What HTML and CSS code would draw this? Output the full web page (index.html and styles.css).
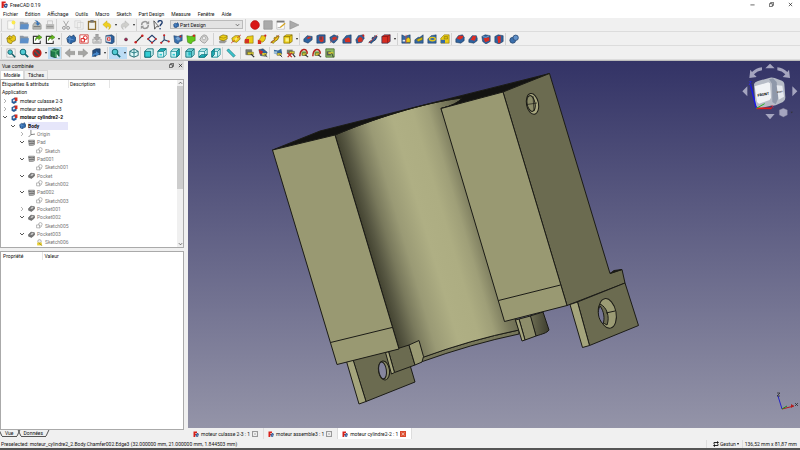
FILE: index.html
```html
<!DOCTYPE html>
<html lang="fr">
<head>
    <meta charset="UTF-8">
    <meta name="viewport" content="width=device-width, initial-scale=1.0">
    <title>FreeCAD 0.19</title>
    <link rel="stylesheet" href="styles.css">
</head>
<body>
<!-- icon sprites -->
<svg class="sprites" aria-hidden="true">
    <symbol id="logo" viewBox="0 0 12 12"><path d="M1 1h7v3H4.500v1.500H7V8H4.500v4H1z" fill="#d8201a"/><path d="M8 4.500l1.500-.5.5 1 1.500.5v2l-1 .5.5 2-1.500 1.500H8L6 11l-1-2 1-2.500z" fill="#1c4a8c"/><circle cx="8.300" cy="8" r="1.200" fill="#fff"/></symbol>
    <symbol id="new" viewBox="0 0 12 12"><path d="M2 1h7l1 2v8H2z" fill="#fafaf7" stroke="#bbb" stroke-width=".6"/><circle cx="9" cy="3" r="2.300" fill="#fbe94b"/></symbol>
    <symbol id="folder" viewBox="0 0 12 12"><path d="M1 2h4l1 1h5v8H1z" fill="#8b96a3"/><path d="M2 5h10l-1 6H1z" fill="#5d8fc9"/></symbol>
    <symbol id="save" viewBox="0 0 12 12"><path d="M1 6l2-3h6l2 3v5H1z" fill="#b9bcb8" stroke="#777" stroke-width=".6"/><path d="M3 1c3-1 5 0 5 3h2L7 7 4 4h2c0-2-1-2-3-3z" fill="#3873b5"/><path d="M2 8h8" stroke="#666"/></symbol>
    <symbol id="print" viewBox="0 0 12 12"><path d="M3 1h6v5H3z" fill="#eee" stroke="#aaa" stroke-width=".6"/><path d="M1 5h10v6H1z" fill="#b9b9b7"/><path d="M2 8h8" stroke="#888"/></symbol>
    <symbol id="cut" viewBox="0 0 12 12"><path d="M3 1l4 7M9 1L5 8" stroke="#aaa" stroke-width="1.200"/><g fill="none" stroke="#999" stroke-width="1.200"><circle cx="3.500" cy="9.500" r="1.700"/><circle cx="8.500" cy="9.500" r="1.700"/></g></symbol>
    <symbol id="copy" viewBox="0 0 12 12"><path d="M1 1h7v8H1zM4 3h7v8H4z" fill="#f1f1f0" stroke="#ccc" stroke-width=".7"/></symbol>
    <symbol id="paste" viewBox="0 0 12 12"><path d="M1 1h10v11H1z" fill="#8b6b2c"/><path d="M2.500 3h7v7.500h-7z" fill="#f0f0ec"/><path d="M4 0h4v3H4z" fill="#777"/></symbol>
    <symbol id="undo" viewBox="0 0 12 12"><path d="M6 1v2.500c5 0 6 5 2 8 1-3 1-4-2-4V10L1 5.500z" fill="#f0d020" stroke="#b89b00" stroke-width=".5"/></symbol>
    <symbol id="redo" viewBox="0 0 12 12"><path d="M6 1v2.500c-5 0-6 5-2 8-1-3-1-4 2-4V10l5-4.500z" fill="#cfcfcc" stroke="#aaa" stroke-width=".5"/></symbol>
    <symbol id="refresh" viewBox="0 0 12 12"><path d="M2 6c0-5 6-5 7-2M10 6c0 5-6 5-7 2" fill="none" stroke="#999" stroke-width="1.800"/><path d="M11 1v4H7zM1 11V7h4z" fill="#999"/></symbol>
    <symbol id="help" viewBox="0 0 12 12"><path d="M1 1l6 7-3 0-2 3z" fill="#eee" stroke="#222" stroke-width=".8"/><path d="M6 3c0-3 5-3 5 0 0 2-2.500 2-2.500 4.500" fill="none" stroke="#233f70" stroke-width="1.700"/><circle cx="8.500" cy="10.500" r="1" fill="#233f70"/></symbol>
    <symbol id="record" viewBox="0 0 12 12"><circle cx="6" cy="6" r="5.300" fill="#d81818" stroke="#a00" stroke-width=".6"/></symbol>
    <symbol id="stop" viewBox="0 0 12 12"><path d="M1 1h10v10H1z" fill="#aaa" stroke="#999"/></symbol>
    <symbol id="note" viewBox="0 0 12 12"><path d="M1 1h9v10H1z" fill="#fff" stroke="#aaa" stroke-width=".7"/><path d="M1 1h9v2H1z" fill="#777"/><path d="M5 9l6-5" stroke="#d6a520" stroke-width="1.500"/><path d="M2 9h3" stroke="#888" stroke-width=".7"/></symbol>
    <symbol id="play" viewBox="0 0 12 12"><path d="M1 1l11 5-11 5z" fill="#aaa" stroke="#888" stroke-width=".6"/></symbol>
    <symbol id="part" viewBox="0 0 12 12"><path d="M1 5l3-3 3 1 2-2 3 3-1 4-3 1-2 3-4-2z" fill="#e8c81a" stroke="#6f5d00" stroke-width=".7"/><path d="M4 2v4l4 3M1 5l3 1 4-2" fill="none" stroke="#8f7800" stroke-width=".7"/></symbol>
    <symbol id="link" viewBox="0 0 12 12"><path d="M1 2h7v1.500H2.500v7H9V8h1.500v4H1z" fill="#333"/><path d="M2.500 3.500H9v7H2.500z" fill="#fff"/><path d="M4 8c0-4 2-5 4-5V1l4 3-4 3V5C6 5 5 6 4 8z" fill="#64b81b" stroke="#286000" stroke-width=".5"/></symbol>
    <symbol id="body" viewBox="0 0 12 12"><path d="M1 5l3-3 3 1 2-2 3 4-1 4-3 1-2 2-4-2z" fill="#2d66a8" stroke="#10294c" stroke-width=".7"/><path d="M4 2l1 4 4 1M1 5l4 1-1 5" fill="none" stroke="#79a9df" stroke-width=".7"/></symbol>
    <symbol id="sketch-red" viewBox="0 0 12 12"><path d="M1 1h10v10H1z" fill="#fff" stroke="#cc3b35"/><circle cx="7.500" cy="4.500" r="2.300" fill="none" stroke="#d22" stroke-width="1.200"/><path d="M2.500 5.500h4v4h-4z" fill="none" stroke="#d22" stroke-width="1.200"/></symbol>
    <symbol id="edit-sketch" viewBox="0 0 12 12"><path d="M1 6h10v5H1z" fill="#ddd" stroke="#888" stroke-width=".7"/><path d="M4.500 0h3v4H10L6 8 2 4h2.500z" fill="#aaa" stroke="#777" stroke-width=".5"/><path d="M3 9.500h6" stroke="#999"/></symbol>
    <symbol id="map" viewBox="0 0 12 12"><path d="M1 2l7-1 3 2v7l-3 2-7-2z" fill="#2d5f9b" stroke="#183250" stroke-width=".6"/><path d="M1.500 3H7v7l-5.500-1z" fill="#e6e6e6"/><path d="M3 4.500h3v3H3z" fill="none" stroke="#d22"/></symbol>
    <symbol id="point" viewBox="0 0 12 12"><circle cx="6" cy="6.500" r="1.800" fill="#a32455" stroke="#222" stroke-width=".5"/></symbol>
    <symbol id="line" viewBox="0 0 12 12"><path d="M2 10l8-8" stroke="#233" stroke-width="1.400"/><circle cx="2" cy="10" r="1.500" fill="#c22"/><circle cx="10" cy="2" r="1.500" fill="#c22"/></symbol>
    <symbol id="plane" viewBox="0 0 12 12"><path d="M1 6l5-4.500L11 6l-5 4.500z" fill="#f6f6f6" stroke="#223d6b" stroke-width="1.300"/><g fill="#c22"><circle cx="1.500" cy="6" r="1.200"/><circle cx="10.500" cy="6" r="1.200"/><circle cx="6" cy="10.500" r="1.200"/></g></symbol>
    <symbol id="axes" viewBox="0 0 12 12"><path d="M5 1v6l6 2M5 7l-4 4" fill="none" stroke="#2b4468" stroke-width="1.400"/><g fill="#c22"><circle cx="5" cy="1.500" r="1.300"/><circle cx="10.500" cy="9" r="1.300"/><circle cx="1.500" cy="10.500" r="1.300"/></g></symbol>
    <symbol id="binder" viewBox="0 0 12 12"><path d="M1 2l5 1 5-2v7l-3 1-2 3-4-2z" fill="#3870ae" stroke="#173558" stroke-width=".6"/><path d="M3 5l3-2 3 3-3 2z" fill="#7da7d4"/><circle cx="9" cy="3" r="1.200" fill="#c22"/></symbol>
    <symbol id="green-binder" viewBox="0 0 12 12"><path d="M1 2l5 1 5-2v7l-3 1-2 3-4-2z" fill="#62c81b" stroke="#2b6d00" stroke-width=".6"/><circle cx="9.500" cy="2" r="1.400" fill="#c22"/></symbol>
    <symbol id="clone" viewBox="0 0 12 12"><path d="M6 1l3 1 2 4-2 3-2 2-3-1-3-3 2-4z" fill="#d4d4d2" stroke="#999"/><circle cx="6" cy="5" r="2" fill="#eee" stroke="#999" stroke-width=".7"/></symbol>
    <symbol id="pad" viewBox="0 0 12 12"><path d="M1 9l4-2 6 1-3 3-6 0z" fill="#999"/><path d="M2 3l4-2 5 1v4L7 8 2 7z" fill="#eccd16" stroke="#715f00" stroke-width=".7"/><path d="M2 4l5 1 4-2" fill="none" stroke="#8c7700" stroke-width=".7"/></symbol>
    <symbol id="revolve" viewBox="0 0 12 12"><path d="M1 5l4-3 5 0 1 4-4 4-5-1z" fill="#eccd16" stroke="#715f00" stroke-width=".7"/><path d="M0 11L12 1" stroke="#c22" stroke-width=".8"/><path d="M4 6l3-2 1 2-3 2z" fill="#f9ec73"/></symbol>
    <symbol id="loft" viewBox="0 0 12 12"><path d="M1 8l3-5 7-1v9H1z" fill="#eccd16" stroke="#715f00" stroke-width=".6"/><path d="M1 6h5v5H1z" fill="#d63122"/></symbol>
    <symbol id="sweep" viewBox="0 0 12 12"><path d="M2 8c1-3 3-3 3-6h5c1 4-1 7-4 8z" fill="#eccd16" stroke="#715f00" stroke-width=".6"/><path d="M1 7l4 1v4H1z" fill="#d63122"/><circle cx="10" cy="2" r="1.300" fill="#c22"/></symbol>
    <symbol id="helix" viewBox="0 0 12 12"><path d="M1 10c3-4 5 0 4-4s4 0 3-4l3 1-2 4-3 2-2 2z" fill="#eccd16" stroke="#715f00" stroke-width=".9"/><path d="M1 11L11 1" stroke="#b33" stroke-width=".7"/></symbol>
    <symbol id="addbox" viewBox="0 0 12 12"><path d="M1 3l3-2h7v8l-3 2H1z" fill="#eccd16" stroke="#715f00" stroke-width=".7"/><path d="M1 3h7v8M8 3l3-2" fill="none" stroke="#715f00" stroke-width=".7"/><path d="M3 5h4v4H3z" fill="#fbf28b"/></symbol>
    <symbol id="pocket" viewBox="0 0 12 12"><path d="M1 6l4-4 6 1v4l-5 4-5-2z" fill="#2e629f" stroke="#142c4b" stroke-width=".6"/><path d="M4 5l3-2 3 1-3 2z" fill="#d63122"/></symbol>
    <symbol id="hole" viewBox="0 0 12 12"><path d="M1 2l3-1h7v9l-3 1H1z" fill="#2e629f" stroke="#142c4b" stroke-width=".6"/><path d="M4 3h5v6l-3 1-2-2z" fill="#d63122"/><path d="M6 3v4" stroke="#223d63" stroke-width="1.200"/></symbol>
    <symbol id="groove" viewBox="0 0 12 12"><path d="M1 4l5-3 5 2-1 4-4 4-4-2z" fill="#2e629f" stroke="#142c4b" stroke-width=".6"/><path d="M3 5l4-2 3 2-4 3z" fill="#d63122"/><path d="M1 11L11 1" stroke="#b44" stroke-width=".7"/></symbol>
    <symbol id="subloft" viewBox="0 0 12 12"><path d="M1 7l4-5 6-1v10H1z" fill="#2e629f" stroke="#142c4b" stroke-width=".6"/><path d="M3 6l5-2 2 2v4H4z" fill="#d63122"/></symbol>
    <symbol id="subsweep" viewBox="0 0 12 12"><path d="M1 7l3-5 6-1 1 4-3 5-6 1z" fill="#2e629f" stroke="#142c4b" stroke-width=".6"/><path d="M3 6l3-3 3 2 0 4-5 1z" fill="#d63122"/><circle cx="10" cy="2" r="1.300" fill="#c22"/></symbol>
    <symbol id="subhelix" viewBox="0 0 12 12"><path d="M1 10c3-4 5 0 4-4s4 0 3-4l3 1-2 4-3 2-2 2z" fill="#2e629f" stroke="#142c4b" stroke-width=".9"/><path d="M1 11L11 1" stroke="#d33" stroke-width=".9"/></symbol>
    <symbol id="subbox" viewBox="0 0 12 12"><path d="M1 3l3-2h7v8l-3 2H1z" fill="#d92c20" stroke="#26385a" stroke-width=".8"/><path d="M1 3h7v8M8 3l3-2" fill="none" stroke="#7a1515" stroke-width=".8"/></symbol>
    <symbol id="mirror" viewBox="0 0 12 12"><path d="M1 1l4 2 2-1 4-1v10H1z" fill="#3569a5" stroke="#173354" stroke-width=".6"/><path d="M6 6l3-2 2 2v4H6z" fill="#eccd16" stroke="#6f5d00" stroke-width=".5"/><path d="M2 7h3v2H2z" fill="#e9e9e9"/><path d="M6 1v10" stroke="#d44" stroke-width=".8"/></symbol>
    <symbol id="linear" viewBox="0 0 12 12"><path d="M1 7l4-3h2l4-3v10H1z" fill="#3569a5" stroke="#173354" stroke-width=".6"/><path d="M3 7l2-1 5-2v3l-5 2z" fill="#d5b90d" stroke="#6f5d00" stroke-width=".5"/></symbol>
    <symbol id="polar" viewBox="0 0 12 12"><path d="M1 6l4-4 6-1v10H1z" fill="#3569a5" stroke="#173354" stroke-width=".6"/><ellipse cx="6.500" cy="6" rx="3.500" ry="2" fill="none" stroke="#e2c51c" stroke-width="1.700"/></symbol>
    <symbol id="multi" viewBox="0 0 12 12"><path d="M1 5l4-4h6v10H1z" fill="#eccd16" stroke="#6f5d00" stroke-width=".6"/><path d="M1 7h5v4H1z" fill="#3569a5"/><path d="M5 3h4v3H5z" fill="#d5b90d" stroke="#6f5d00" stroke-width=".5"/></symbol>
    <symbol id="fillet" viewBox="0 0 12 12"><path d="M1 6l3-4 5-1 2 3v4l-4 3-6-1z" fill="#2e629f" stroke="#142c4b" stroke-width=".6"/><path d="M2 5l3-3 5 0-1 3-3 2z" fill="#e02b20"/></symbol>
    <symbol id="chamfer" viewBox="0 0 12 12"><path d="M1 7l4-5 5 0 1 3v3l-4 3-6-1z" fill="#2e629f" stroke="#142c4b" stroke-width=".6"/><path d="M3 7l3-5 4 1-2 5z" fill="#e02b20"/></symbol>
    <symbol id="draft" viewBox="0 0 12 12"><path d="M1 3l4-2 6 1v7l-5 3-4-3z" fill="#2e629f" stroke="#142c4b" stroke-width=".6"/><path d="M3 5l7-1v4l-5 2z" fill="#d92c20"/><path d="M2 3l4 1 4-2" fill="none" stroke="#7da7d4"/></symbol>
    <symbol id="thickness" viewBox="0 0 12 12"><path d="M1 3l4-2 6 1v7l-5 3-5-2z" fill="#2e629f" stroke="#142c4b" stroke-width=".6"/><path d="M4 3l4-1v8l-3 1z" fill="#e02b20"/></symbol>
    <symbol id="boolean" viewBox="0 0 12 12"><circle cx="4.500" cy="7.500" r="3.500" fill="#3b70ad" stroke="#2a4a74"/><circle cx="8" cy="4.500" r="3.200" fill="#6191c9" stroke="#2a4a74"/></symbol>
    <symbol id="fitall" viewBox="0 0 12 12"><path d="M1 1h10v10H1z" fill="#f5f5f5" stroke="#999" stroke-width=".6"/><circle cx="5" cy="5" r="2.700" fill="#46c5cd" stroke="#125a62"/><path d="M7 7l4 4" stroke="#125a62" stroke-width="1.700"/></symbol>
    <symbol id="zoom" viewBox="0 0 12 12"><circle cx="4.800" cy="4.800" r="3.400" fill="#52cbd3" stroke="#126873" stroke-width="1.200"/><path d="M7 7l4 4" stroke="#126873" stroke-width="2"/></symbol>
    <symbol id="draw" viewBox="0 0 12 12"><circle cx="6" cy="6" r="4.500" fill="#3a4a50" stroke="#c2221d" stroke-width="2"/><path d="M3 3l6 6" stroke="#c2221d" stroke-width="1.700"/></symbol>
    <symbol id="box-green" viewBox="0 0 12 12"><path d="M1 3l4-2 6 1v8l-4 2-6-2z" fill="#1f7a4a" stroke="#0a3524" stroke-width=".7"/><path d="M1 3l6 1 4-2M7 4v7" fill="none" stroke="#69c27c"/><path d="M8 7l3 4-3 1z" fill="#fff"/></symbol>
    <symbol id="back" viewBox="0 0 12 12"><path d="M6 1v3h6v4H6v3L0 6z" fill="#a5a5a3" stroke="#8d8d8b" stroke-width=".5"/></symbol>
    <symbol id="forward" viewBox="0 0 12 12"><path d="M6 1v3H0v4h6v3l6-5z" fill="#a5a5a3" stroke="#8d8d8b" stroke-width=".5"/></symbol>
    <symbol id="linkview" viewBox="0 0 12 12"><path d="M2 3l4-2h5v7H8l-2 2H2z" fill="#244f83" stroke="#14304f" stroke-width=".7"/><path d="M1 11c0-4 3-5 5-5V4l4 3-4 3V8c-2 0-3 1-5 3z" fill="#4687c9"/></symbol>
    <symbol id="axo" viewBox="0 0 12 12"><path d="M6 1l5 3v5l-5 2-5-2V4z" fill="#dff8f9" stroke="#0b5960"/><path d="M1 4l5 2 5-2M6 1v10" fill="none" stroke="#116d75"/></symbol>
    <symbol id="front" viewBox="0 0 12 12"><path d="M1 4l3-3h7v7l-3 3H1z" fill="#cdf5f6" stroke="#0b6870"/><path d="M1 4h7v7H1z" fill="#34cdd4" stroke="#0b6870"/></symbol>
    <symbol id="top" viewBox="0 0 12 12"><path d="M1 4l3-3h7v7l-3 3H1z" fill="#d8f7f8" stroke="#0b8890"/><path d="M1 4l3-3h7L8 4z" fill="#22bac4" stroke="#0b6870"/><path d="M8 4v7" fill="none" stroke="#128791"/><path d="M3 7h3v2H3z" fill="#34cdd4"/></symbol>
    <symbol id="right" viewBox="0 0 12 12"><path d="M1 4l3-3h7v7l-3 3H1z" fill="#d8f7f8" stroke="#0b8890"/><path d="M8 4l3-3v7l-3 3z" fill="#22bac4" stroke="#0b6870"/><path d="M1 4h7" fill="none" stroke="#128791"/><path d="M3 7h3v2H3z" fill="#34cdd4"/></symbol>
    <symbol id="rear" viewBox="0 0 12 12"><path d="M1 4l3-3h7v7l-3 3H1z" fill="#7fdfe4" stroke="#0b6870"/><path d="M1 4h7v7M8 4l3-3" fill="none" stroke="#0b6870"/><path d="M4 5h3v4H4z" fill="#22bac4"/></symbol>
    <symbol id="bottom" viewBox="0 0 12 12"><path d="M1 4l3-3h7v7l-3 3H1z" fill="#d8f7f8" stroke="#0b8890"/><path d="M1 11l3-3h7l-3 3z" fill="#22bac4" stroke="#0b6870"/><path d="M1 4h7v7M8 4l3-3" fill="none" stroke="#128791"/></symbol>
    <symbol id="left" viewBox="0 0 12 12"><path d="M1 4l3-3h7v7l-3 3H1z" fill="#d8f7f8" stroke="#0b8890"/><path d="M1 4l3-3v7l-3 3z" fill="#22bac4" stroke="#0b6870"/><path d="M1 4h7v7M8 4l3-3" fill="none" stroke="#128791"/></symbol>
    <symbol id="ruler" viewBox="0 0 12 12"><path d="M3 1l8 8-2 2-8-8z" fill="#3bc4cd" stroke="#0b6870" stroke-width=".7"/></symbol>
    <symbol id="measure" viewBox="0 0 12 12"><path d="M1 2h7v6H1z" fill="#777d74" stroke="#555" stroke-width=".6"/><path d="M3 5h7v3H3z" fill="#d9ca32" stroke="#5b5205" stroke-width=".5"/><path d="M7 7l4 4" stroke="#333" stroke-width="1.500"/></symbol>
    <symbol id="measure-red" viewBox="0 0 12 12"><path d="M1 2l5-1 5 4-2 5-6-1z" fill="#2e629f" stroke="#333" stroke-width=".6"/><path d="M1 2l5 2-1 4-3-1z" fill="#c52d26"/><path d="M5 6h5v3H5z" fill="#d9ca32"/><path d="M8 7l3 4" stroke="#333"/></symbol>
    <symbol id="measure-delete" viewBox="0 0 12 12"><path d="M1 2h7v5H1z" fill="#777d74"/><path d="M4 4h6v3H4z" fill="#d9ca32" stroke="#333" stroke-width=".5"/><path d="M2 6l5 5M7 6l-5 5" stroke="#c52d26" stroke-width="1.500"/><path d="M8 7l3 4" stroke="#333" stroke-width="1.300"/></symbol>
    <symbol id="measure-clear" viewBox="0 0 12 12"><path d="M3 4h6v5H3z" fill="#78a84a"/><path d="M4 6h5v3H4z" fill="#d9ca32" stroke="#333" stroke-width=".5"/><path d="M1 10c0-10 9-11 9-3" fill="none" stroke="#b5251d" stroke-width="1.800"/><path d="M7 8l4 3" stroke="#333" stroke-width="1.300"/></symbol>
    <symbol id="measure-delta" viewBox="0 0 12 12"><path d="M1 1h10v10H1z" fill="#8dbb60" stroke="#52713b"/><path d="M2 4h5v5H2z" fill="#555b52"/><path d="M4 5h6v2H4z" fill="#d9ca32"/><path d="M8 6l2 5" stroke="#333"/></symbol>
    <symbol id="measure-blue" viewBox="0 0 12 12"><path d="M1 2l5 1 4-2 1 6-5 1-4-1z" fill="#34699d"/><path d="M1 4h4v3H1z" fill="#9ec1d9"/><path d="M5 6h5v3H5z" fill="#d9ca32" stroke="#555" stroke-width=".5"/><path d="M8 8l3 3" stroke="#333"/></symbol>
    <symbol id="document" viewBox="0 0 12 12"><path d="M1 4l6-3 3 8-5 3-4-2z" fill="#2b5c98"/><path d="M6 1h5v6H7z" fill="#d22c22"/><path d="M3 5l3-1 1 3-3 1z" fill="#e9edf5"/></symbol>
    <symbol id="t-axes" viewBox="0 0 12 12"><path d="M5 0v8l7-1M5 8l-4 4" fill="none" stroke="#555" stroke-width="1.200"/></symbol>
    <symbol id="t-pad" viewBox="0 0 12 12"><path d="M1 2h10v8l-3 1H2z" fill="#bbb" stroke="#666"/><path d="M1 4l6 1 4-1M2 8h5l4-1" fill="none" stroke="#555" stroke-width="1.300"/></symbol>
    <symbol id="t-pocket" viewBox="0 0 12 12"><path d="M1 6l4-4 6 1v4l-5 4-5-2z" fill="#777" stroke="#555"/><path d="M4 6l3-3 3 1-3 3z" fill="#ccc"/></symbol>
    <symbol id="t-sketch" viewBox="0 0 12 12"><circle cx="7.500" cy="4" r="3" fill="#fff" stroke="#888"/><path d="M1 5h5v5H1z" fill="#fff" stroke="#888"/><path d="M6 11l4-4" stroke="#999"/></symbol>
    <symbol id="t-warning" viewBox="0 0 12 12"><circle cx="6" cy="4" r="3" fill="#eee" stroke="#888"/><path d="M2 6h8v5H2z" fill="#e8cf32"/><path d="M5 7l6 5" stroke="#8a7400"/></symbol>
    <symbol id="down" viewBox="0 0 12 12"><path d="M2 4l4 4 4-4" fill="none" stroke="#444" stroke-width="1.800"/></symbol>
    <symbol id="next" viewBox="0 0 12 12"><path d="M4 2l4 4-4 4" fill="none" stroke="#999" stroke-width="1.500"/></symbol>
    <symbol id="up" viewBox="0 0 12 12"><path d="M2 8l4-4 4 4" fill="none" stroke="#444" stroke-width="1.800"/></symbol>
    <symbol id="close" viewBox="0 0 12 12"><path d="M2 2l8 8M10 2l-8 8" stroke="currentColor" stroke-width="1.500"/></symbol>
    <symbol id="restore" viewBox="0 0 12 12"><path d="M1 4h7v7H1zM4 4V1h7v7H8" fill="none" stroke="currentColor" stroke-width="1.400"/></symbol>
    <symbol id="minus" viewBox="0 0 12 12"><path d="M1 7h10" stroke="currentColor" stroke-width="1.500"/></symbol>
</svg>

<div class="window">
    <header class="titlebar">
        <svg class="logo"><use href="#logo"/></svg>
        <h1>FreeCAD 0.19</h1>
        <div class="window-buttons">
            <button aria-label="Réduire"><svg><use href="#minus"/></svg></button>
            <button aria-label="Restaurer"><svg><use href="#restore"/></svg></button>
            <button aria-label="Fermer"><svg><use href="#close"/></svg></button>
        </div>
    </header>
    <nav class="menubar">
        <a href="#">Fichier</a>
        <a href="#">Édition</a>
        <a href="#">Affichage</a>
        <a href="#">Outils</a>
        <a href="#">Macro</a>
        <a href="#">Sketch</a>
        <a href="#">Part Design</a>
        <a href="#">Measure</a>
        <a href="#">Fenêtre</a>
        <a href="#">Aide</a>
    </nav>

    <div class="toolbar">
        <div class="group">
            <button aria-label="Nouveau"><svg><use href="#new"/></svg></button>
            <button aria-label="Ouvrir"><svg><use href="#folder"/></svg></button>
            <button aria-label="Enregistrer"><svg><use href="#save"/></svg></button>
            <button aria-label="Imprimer"><svg><use href="#print"/></svg></button>
        </div>
        <div class="group">
            <button aria-label="Couper"><svg><use href="#cut"/></svg></button>
            <button aria-label="Copier"><svg><use href="#copy"/></svg></button>
            <button aria-label="Coller"><svg><use href="#paste"/></svg></button>
        </div>
        <div class="group plain">
            <button aria-label="Annuler"><svg><use href="#undo"/></svg></button>
            <button class="arrow" aria-label="Liste annuler"></button>
            <button aria-label="Rétablir"><svg><use href="#redo"/></svg></button>
            <button class="arrow" aria-label="Liste rétablir"></button>
        </div>
        <div class="group plain">
            <button aria-label="Rafraîchir"><svg><use href="#refresh"/></svg></button>
            <button aria-label="Qu'est-ce que c'est ?"><svg><use href="#help"/></svg></button>
        </div>
        <div class="workbench">
            <svg><use href="#body"/></svg>
            <select aria-label="Atelier"><option>Part Design</option></select>
            <svg class="chevron"><use href="#down"/></svg>
        </div>
        <div class="group">
            <button aria-label="Enregistrer une macro"><svg><use href="#record"/></svg></button>
            <button aria-label="Arrêter"><svg><use href="#stop"/></svg></button>
            <button aria-label="Macros"><svg><use href="#note"/></svg></button>
            <button aria-label="Exécuter"><svg><use href="#play"/></svg></button>
        </div>
    </div>

    <div class="toolbar">
        <div class="group">
            <button aria-label="Créer une pièce"><svg><use href="#part"/></svg></button>
            <button aria-label="Créer un groupe"><svg><use href="#folder"/></svg></button>
            <button aria-label="Créer un lien"><svg><use href="#link"/></svg></button>
            <button aria-label="Actions de lien"><svg><use href="#link"/></svg></button>
            <button class="arrow" aria-label="Liste des liens"></button>
        </div>
        <div class="group">
            <button aria-label="Créer un corps"><svg><use href="#body"/></svg></button>
            <button aria-label="Créer une esquisse"><svg><use href="#sketch-red"/></svg></button>
            <button aria-label="Éditer l'esquisse"><svg><use href="#edit-sketch"/></svg></button>
            <button aria-label="Appliquer l'esquisse"><svg><use href="#map"/></svg></button>
        </div>
        <div class="group">
            <button aria-label="Point"><svg><use href="#point"/></svg></button>
            <button aria-label="Ligne"><svg><use href="#line"/></svg></button>
            <button aria-label="Plan"><svg><use href="#plane"/></svg></button>
            <button aria-label="Repère"><svg><use href="#axes"/></svg></button>
            <button aria-label="Forme liée"><svg><use href="#binder"/></svg></button>
            <button aria-label="Sous-forme liée"><svg><use href="#green-binder"/></svg></button>
            <button aria-label="Clone"><svg><use href="#clone"/></svg></button>
        </div>
        <div class="group wide">
            <button aria-label="Protrusion"><svg><use href="#pad"/></svg></button>
            <button aria-label="Révolution"><svg><use href="#revolve"/></svg></button>
            <button aria-label="Lissage additif"><svg><use href="#loft"/></svg></button>
            <button aria-label="Balayage additif"><svg><use href="#sweep"/></svg></button>
            <button aria-label="Hélice additive"><svg><use href="#helix"/></svg></button>
            <button aria-label="Primitive additive"><svg><use href="#addbox"/></svg></button>
            <button class="arrow" aria-label="Liste des primitives additives"></button>
        </div>
        <div class="group plain">
            <button aria-label="Cavité"><svg><use href="#pocket"/></svg></button>
            <button aria-label="Perçage"><svg><use href="#hole"/></svg></button>
            <button aria-label="Rainure"><svg><use href="#groove"/></svg></button>
            <button aria-label="Lissage soustractif"><svg><use href="#subloft"/></svg></button>
            <button aria-label="Balayage soustractif"><svg><use href="#subsweep"/></svg></button>
            <button aria-label="Hélice soustractive"><svg><use href="#subhelix"/></svg></button>
            <button aria-label="Primitive soustractive"><svg><use href="#subbox"/></svg></button>
            <button class="arrow" aria-label="Liste des primitives soustractives"></button>
        </div>
        <div class="group plain">
            <button aria-label="Symétrie"><svg><use href="#mirror"/></svg></button>
            <button aria-label="Répétition linéaire"><svg><use href="#linear"/></svg></button>
            <button aria-label="Répétition circulaire"><svg><use href="#polar"/></svg></button>
            <button aria-label="Transformation multiple"><svg><use href="#multi"/></svg></button>
        </div>
        <div class="group plain">
            <button aria-label="Congé"><svg><use href="#fillet"/></svg></button>
            <button aria-label="Chanfrein"><svg><use href="#chamfer"/></svg></button>
            <button aria-label="Dépouille"><svg><use href="#draft"/></svg></button>
            <button aria-label="Évidement"><svg><use href="#thickness"/></svg></button>
        </div>
        <div class="group plain">
            <button aria-label="Opération booléenne"><svg><use href="#boolean"/></svg></button>
        </div>
    </div>

    <div class="toolbar">
        <div class="group">
            <button aria-label="Tout afficher"><svg><use href="#fitall"/></svg></button>
            <button aria-label="Afficher la sélection"><svg><use href="#zoom"/></svg></button>
            <button aria-label="Style de représentation"><svg><use href="#draw"/></svg></button>
            <button class="arrow" aria-label="Liste des styles"></button>
            <button class="on" aria-label="Boîte englobante"><svg><use href="#box-green"/></svg></button>
        </div>
        <div class="group plain">
            <button aria-label="Précédent"><svg><use href="#back"/></svg></button>
            <button aria-label="Suivant"><svg><use href="#forward"/></svg></button>
            <button aria-label="Aller à l'objet lié"><svg><use href="#linkview"/></svg></button>
            <button class="arrow" aria-label="Liste des objets liés"></button>
        </div>
        <div class="group plain">
            <button class="on" aria-label="Zoom"><svg><use href="#zoom"/></svg></button>
            <button class="arrow on" aria-label="Liste des zooms"></button>
            <button aria-label="Axonométrique"><svg><use href="#axo"/></svg></button>
        </div>
        <div class="group plain">
            <button aria-label="Devant"><svg><use href="#front"/></svg></button>
            <button aria-label="Dessus"><svg><use href="#top"/></svg></button>
            <button aria-label="Droite"><svg><use href="#right"/></svg></button>
        </div>
        <div class="group plain">
            <button aria-label="Arrière"><svg><use href="#rear"/></svg></button>
            <button aria-label="Dessous"><svg><use href="#bottom"/></svg></button>
            <button aria-label="Gauche"><svg><use href="#left"/></svg></button>
        </div>
        <div class="group plain">
            <button aria-label="Mesurer la distance"><svg><use href="#ruler"/></svg></button>
        </div>
        <div class="group wide">
            <button aria-label="Mesure linéaire"><svg><use href="#measure"/></svg></button>
            <button aria-label="Mesure angulaire"><svg><use href="#measure-red"/></svg></button>
        </div>
        <div class="group plain">
            <button aria-label="Actualiser les mesures"><svg><use href="#measure-blue"/></svg></button>
            <button aria-label="Effacer les mesures"><svg><use href="#measure-delete"/></svg></button>
            <button aria-label="Basculer tout"><svg><use href="#measure-clear"/></svg></button>
            <button aria-label="Basculer 3D"><svg><use href="#measure-clear"/></svg></button>
            <button aria-label="Basculer delta"><svg><use href="#measure-delta"/></svg></button>
        </div>
    </div>

    <main class="workspace">
        <aside class="panel">
            <div class="panel-title">
                <h2>Vue combinée</h2>
                <button aria-label="Détacher"><svg><use href="#restore"/></svg></button>
                <button aria-label="Fermer le panneau"><svg><use href="#close"/></svg></button>
            </div>
            <div class="panel-tabs">
                <button class="active">Modèle</button>
                <button>Tâches</button>
            </div>
            <div class="tree-box">
                <div class="tree-view">
                    <div class="tree-header"><span>Étiquettes &amp; attributs</span><span>Description</span></div>
                    <ul class="tree">
                        <li class="root">Application</li>
                        <li class="level-0"><svg><use href="#next"/></svg><svg><use href="#document"/></svg><span>moteur culasse 2-3</span></li>
                        <li class="level-0"><svg><use href="#next"/></svg><svg><use href="#document"/></svg><span>moteur assemble3</span></li>
                        <li class="level-0 bold"><svg><use href="#down"/></svg><svg><use href="#document"/></svg><span>moteur cylindre2-2</span></li>
                        <li class="level-1 bold selected"><svg><use href="#down"/></svg><svg><use href="#body"/></svg><span>Body</span></li>
                        <li class="level-2"><svg><use href="#next"/></svg><svg><use href="#t-axes"/></svg><span>Origin</span></li>
                        <li class="level-2"><svg><use href="#down"/></svg><svg><use href="#t-pad"/></svg><span>Pad</span></li>
                        <li class="level-3"><svg></svg><svg><use href="#t-sketch"/></svg><span>Sketch</span></li>
                        <li class="level-2"><svg><use href="#down"/></svg><svg><use href="#t-pad"/></svg><span>Pad001</span></li>
                        <li class="level-3"><svg></svg><svg><use href="#t-sketch"/></svg><span>Sketch001</span></li>
                        <li class="level-2"><svg><use href="#down"/></svg><svg><use href="#t-pocket"/></svg><span>Pocket</span></li>
                        <li class="level-3"><svg></svg><svg><use href="#t-sketch"/></svg><span>Sketch002</span></li>
                        <li class="level-2"><svg><use href="#down"/></svg><svg><use href="#t-pad"/></svg><span>Pad002</span></li>
                        <li class="level-3"><svg></svg><svg><use href="#t-sketch"/></svg><span>Sketch003</span></li>
                        <li class="level-2"><svg><use href="#next"/></svg><svg><use href="#t-pocket"/></svg><span>Pocket001</span></li>
                        <li class="level-2"><svg><use href="#down"/></svg><svg><use href="#t-pocket"/></svg><span>Pocket002</span></li>
                        <li class="level-3"><svg></svg><svg><use href="#t-sketch"/></svg><span>Sketch005</span></li>
                        <li class="level-2"><svg><use href="#down"/></svg><svg><use href="#t-pocket"/></svg><span>Pocket003</span></li>
                        <li class="level-3"><svg></svg><svg><use href="#t-warning"/></svg><span>Sketch006</span></li>
                    </ul>
                </div>
                <div class="scrollbar">
                    <svg><use href="#up"/></svg>
                    <div class="thumb"></div>
                    <svg><use href="#down"/></svg>
                </div>
            </div>
            <div class="property-box">
                <table>
                    <tr><th>Propriété</th><th>Valeur</th></tr>
                </table>
            </div>
            <div class="bottom-tabs">
                <button>Vue</button>
                <button>Données</button>
            </div>
        </aside>

        <section class="document">
            <div class="viewport">
                <svg class="model" viewBox="188 61 612 367" role="img" aria-label="moteur cylindre2-2">
                    <defs>
                        <linearGradient id="bore" gradientUnits="userSpaceOnUse" x1="335" y1="135" x2="460" y2="98">
                            <stop offset="0" stop-color="#424230"/>
                            <stop offset=".07" stop-color="#585843"/>
                            <stop offset=".16" stop-color="#79795c"/>
                            <stop offset=".28" stop-color="#9a9a75"/>
                            <stop offset=".46" stop-color="#afaf84"/>
                            <stop offset=".62" stop-color="#adad82"/>
                            <stop offset=".74" stop-color="#9f9f78"/>
                            <stop offset=".86" stop-color="#7b7b5d"/>
                            <stop offset="1" stop-color="#606049"/>
                        </linearGradient>
                        <linearGradient id="collar" x1="0" x2="1"><stop offset="0" stop-color="#6f6f54"/><stop offset="1" stop-color="#3d3d2e"/></linearGradient>
                        <linearGradient id="sky" gradientUnits="userSpaceOnUse" x1="0" y1="61" x2="0" y2="428"><stop offset="0" stop-color="#333366"/><stop offset="1" stop-color="#9494a8"/></linearGradient>
                    </defs>
                    <g stroke="#1b1b16" stroke-width="1" stroke-linejoin="round">
                        <!-- lower left lug -->
                        <path d="M353 360l33-10 24 15 5 17-49 19.500z" fill="#6b6b50"/>
                        <path d="M346.500 361.500l6.500-2 13 42-7 2.500z" fill="#a5a57c"/>
                        <ellipse cx="384" cy="370.500" rx="5.500" ry="9.500" transform="rotate(-8 384 370.500)" fill="#8b8b68"/>
                        <ellipse cx="382.500" cy="370.500" rx="3.800" ry="8.500" transform="rotate(-8 382 370)" fill="url(#sky)"/>
                        <!-- lower right collar -->
                        <path d="M530 316l13-4 6 18c-2 3-7 4-13 6z" fill="url(#collar)"/>
                        <path d="M519 319l11.500-3 5.500 20-11 4z" fill="#8d8d6a"/>
                        <!-- cylinder -->
                        <path d="M422 357.500Q470 340 519 330v4q-48 10-98 28z" fill="#77775a"/>
                        <path d="M335 135C370 120 425 102 462 98q-5 7-21 10.500L519 330Q470 340 424 357l-25-8z" fill="url(#bore)"/>
                        <path d="M515.500 320l3.500-1 6 21-3 1z" fill="#a5a57c"/>
                        <path d="M388.500 351.500l20.500-6.500 6 20-20.500 7.500z" fill="#6b6b50"/>
                        <path d="M385.500 352.500l3-1 6 21-3 1.500z" fill="#a5a57c"/>
                        <path d="M409 345l10-4.500 4.500 16-1.500 5.500-7 3z" fill="#999972"/>
                        <!-- top face -->
                        <path d="M272.500 150L320 131l229.500-57.500L503 92l-62 16.500q16-4 21-10.500C425 102 370 120 335 135z" fill="#131311"/>
                        <!-- left block -->
                        <path d="M272.500 150l62.500-15 64 214-62 15.500z" fill="#999972"/>
                        <path d="M330.500 342.500l61.500-15" fill="none"/>
                        <!-- right block -->
                        <path d="M503 92l46.500-18.500L610 273.500l12-4 3 13.500-58 22.500z" fill="#6b6b50"/>
                        <path d="M610 273.500l4-3 8-1-12 4z" fill="#191916"/>
                        <path d="M441 108.500L503 92l64 213.500-62.500 16z" fill="#999972"/>
                        <path d="M498.500 300.500l62-15.500" fill="none"/>
                        <!-- lower right lug -->
                        <path d="M577.500 302l47.500-19 13.500 42.500-49 20z" fill="#6b6b50"/>
                        <path d="M570 304.500l7.500-2.500 12 43.500-7 2z" fill="#a5a57c"/>
                        <ellipse cx="607.500" cy="313.500" rx="8.500" ry="15" transform="rotate(-11 607 313)" fill="#9b9b74"/>
                        <path d="M600 304c7 3 10 13 7 21-8-3-11-16-7-21z" fill="#6b6b50"/>
                        <path d="M600 306c4 5 5 13 3 18-5-5-6-13-3-18z" fill="url(#sky)"/>
                        <path d="M606 313l9-2" fill="none"/>
                        <!-- upper hole -->
                        <ellipse cx="532.500" cy="104" rx="6" ry="10.500" transform="rotate(-11 532 104)" fill="#aaa980"/>
                        <ellipse cx="531" cy="103.500" rx="4" ry="8" transform="rotate(-11 531 103)" fill="#8b8b68"/>
                        <path d="M527 104.500l10-1.500M533 96l1 15" fill="none" stroke-width=".7"/>
                    </g>
                </svg>
                <!-- navigation cube -->
                <svg class="navcube" viewBox="0 3 210 195">
                    <g fill="#a5a5bf">
                        <path d="M120 11l14 14h-28zM120 178l14-16h-28zM37 94l15-15v30zM202 94l-15-15v30z"/>
                        <path d="M58 54l3-25 5 7q12-12 30-14v9q-14 2-24 12l8 8zM180 54l-3-25-5 7q-12-12-30-14v9q14 2 24 12l-8 8z"/>
                        <path d="M148 150l12-5 12 5v15l-12 6-12-6z" stroke="#777790"/>
                    </g>
                    <path d="M182 155h7l-4 5z" fill="#333"/>
                    <path d="M72 72q2-6 12-9l36-10q6-1 14 1l22 8q6 3 7 9l3 42q0 9-7 13l-22 10q-6 2-14 1l-30 7q-14-1-17-10z" fill="#b7bcc7"/>
                    <path d="M74 79l41-12 5 3 3 43-4 7-32 11-6-5z" fill="#f1f3f6"/>
                    <path d="M117 58l12-3 11 11 5 49-8 18-10-7-1-55z" fill="#8f98aa"/>
                    <path d="M140 76l17 1 5 33-16 9z" fill="#e7eaf0"/>
                    <g class="cube-label">
                        <text x="83" y="110" transform="rotate(-10 83 110)">FRONT</text>
                        <text class="side" x="142" y="99" transform="rotate(-10 142 99)">RIGHT</text>
                    </g>
                    <path d="M79 145L62 76" stroke="#1717f0" stroke-width="4"/>
                    <path d="M79 145h46" stroke="#e01818" stroke-width="5"/>
                    <path d="M79 145l25-14" stroke="#28b428" stroke-width="3"/>
                    <text x="58" y="76" fill="#1717f0" font-size="14">Z</text>
                    <text x="122" y="143" fill="#e01818" font-size="12">X</text>
                </svg>
                <svg class="axis" viewBox="0 0 24 24">
                    <path d="M6 17L2 4" stroke="#2424c8" stroke-width="1"/>
                    <path d="M6 17l12-3" stroke="#b51b1b" stroke-width="1"/>
                    <path d="M6 17l5-3" stroke="#1c8e1c" stroke-width="1"/>
                    <path d="M15 12l3 2-3 2z" fill="#b51b1b"/>
                    <path d="M19 11l3 3M22 11l-3 3M1 1h3L1 4h3" fill="none" stroke="#222" stroke-width=".7"/>
                </svg>
            </div>
            <div class="doc-tabs">
                <div class="doc-tab"><svg><use href="#logo"/></svg><a href="#">moteur culasse 2-3 : 1</a><button aria-label="Fermer moteur culasse 2-3"><svg><use href="#close"/></svg></button></div>
                <div class="doc-tab"><svg><use href="#logo"/></svg><a href="#">moteur assemble3 : 1</a><button aria-label="Fermer moteur assemble3"><svg><use href="#close"/></svg></button></div>
                <div class="doc-tab active"><svg><use href="#logo"/></svg><a href="#">moteur cylindre2-2 : 1</a><button aria-label="Fermer moteur cylindre2-2"><svg><use href="#close"/></svg></button></div>
            </div>
        </section>
    </main>

    <footer class="statusbar">
        <span class="message">Preselected: moteur_cylindre2_2.Body.Chamfer002.Edge3 (32.000000 mm, 21.000000 mm, 1.844503 mm)</span>
        <button class="navstyle"><svg viewBox="0 0 12 12"><path d="M2 6V3h7M10 6v3H3" fill="none" stroke="#111" stroke-width="1.800"/><path d="M8 0l4 3-4 3zM4 6L0 9l4 3z" fill="#111"/></svg>Gestun<i></i></button>
        <span class="dimensions">136,52 mm x 81,87 mm</span>
    </footer>
</div>
</body>
</html>
```
FILE: styles.css
```css
* {
    margin: 0;
    padding: 0;
    box-sizing: border-box;
}
body {
    font-family: Roboto, "Liberation Sans", sans-serif;
    font-size: 5px;
    line-height: 8px;
    color: #111;
    background: #f0f0f0;
}
button, select {
    font: inherit;
    color: inherit;
    border: none;
    background: none;
}
a {
    color: inherit;
    text-decoration: none;
}
h1, h2 {
    font-size: 5px;
    font-weight: 400;
}
.sprites {
    display: none;
}
.window {
    display: flex;
    flex-direction: column;
    height: 100vh;
    border-bottom: 2px solid #555;
}

/* title and menus */
.titlebar {
    display: flex;
    align-items: center;
    gap: 2px;
    height: 9px;
    padding: 0 7px 0 1px;
    background: #fff;
}
.titlebar .logo {
    width: 7px;
    height: 7px;
}
.window-buttons {
    display: flex;
    gap: 14px;
    margin-left: auto;
}
.window-buttons button {
    display: flex;
}
.window-buttons svg {
    width: 5px;
    height: 5px;
}
.menubar {
    display: flex;
    gap: 7px;
    height: 9px;
    padding: 1px 0 0 3px;
    background: #fff;
}

/* toolbars */
.toolbar {
    display: flex;
    align-items: center;
    height: 14px;
    padding-left: 1px;
    border-bottom: 1px solid #dcdcdc;
}
.group {
    display: flex;
    padding-left: 2px;
    border-left: 1px solid #d2d2d2;
}
.group.plain {
    padding-left: 1px;
}
.group.wide {
    margin-left: 3px;
}
.group button {
    display: flex;
    align-items: center;
    justify-content: center;
    width: 13px;
    height: 12px;
}
.group svg {
    width: 10px;
    height: 10px;
}
.group .arrow {
    width: 5px;
}
.group .arrow::before {
    content: "";
    border: 1px solid transparent;
    border-top: 2px solid #222;
    border-bottom: none;
}
.group .on {
    background: #bcdcf4;
}
.workbench {
    display: flex;
    align-items: center;
    width: 73px;
    height: 9px;
    margin: 0 2px 0 6px;
    padding: 0 2px;
    border: 1px solid #bbb;
    background: #e3e3e3;
}
.workbench svg {
    width: 6px;
    height: 6px;
}
.workbench select {
    flex: 1;
    padding-left: 1px;
    appearance: none;
}
.workbench .chevron {
    width: 5px;
}

/* combined view */
.workspace {
    display: flex;
    flex: 1;
    min-height: 0;
    border-top: 1px solid #bbb;
}
.panel {
    display: flex;
    flex-direction: column;
    flex: 0 0 184px;
    margin-right: 4px;
}
.panel-title {
    display: flex;
    align-items: center;
    gap: 4px;
    height: 9px;
    padding: 0 1px 0 2px;
    background: #dedede;
}
.panel-title h2 {
    flex: 1;
}
.panel-title button {
    display: flex;
}
.panel-title svg {
    width: 5px;
    height: 5px;
}
.panel-tabs {
    display: flex;
    height: 9px;
}
.panel-tabs button {
    width: 24px;
    border: 1px solid #d9d9d9;
    border-bottom: none;
}
.panel-tabs .active {
    background: #fff;
}
.tree-box {
    display: flex;
    flex: 168;
    min-height: 0;
    border: 1px solid #aaa;
    background: #fff;
}
.tree-view {
    display: flex;
    flex-direction: column;
    flex: 1;
}
.tree-header {
    display: flex;
    padding-left: 1px;
}
.tree-header span {
    width: 41px;
    padding-left: 1px;
    border-right: 1px solid #e5e5e5;
}
.tree-header span:first-child {
    width: 67px;
    padding-left: 0;
}
.tree {
    display: flex;
    flex-direction: column;
    flex: 1;
    list-style: none;
}
.tree li {
    display: flex;
    flex: 1;
    align-items: center;
    min-height: 0;
    color: #777;
}
.tree li svg {
    width: 7px;
    height: 7px;
    margin-right: 2px;
}
.tree li svg:first-child {
    width: 6px;
    height: 6px;
    margin: 0 3px 0 1px;
}
.tree .root {
    padding-left: 1px;
    color: #111;
}
.tree .level-0,
.tree .level-1 {
    color: #111;
}
.tree .level-1 {
    padding-left: 8px;
}
.tree .level-2 {
    padding-left: 17px;
}
.tree .level-3 {
    padding-left: 25px;
}
.tree .bold {
    font-weight: 700;
}
.tree .selected span {
    width: 40px;
    background: #e6e6fa;
}
.scrollbar {
    display: flex;
    flex-direction: column;
    align-items: center;
    width: 6px;
    background: #f0f0f0;
}
.scrollbar svg {
    width: 5px;
    height: 6px;
}
.scrollbar .thumb {
    width: 6px;
    height: 62%;
    margin-bottom: auto;
    background: #cdcdcd;
}
.property-box {
    flex: 179;
    margin-top: 3px;
    border: 1px solid #aaa;
    background: #fff;
}
.property-box table {
    width: 100%;
    border-collapse: collapse;
}
.property-box th {
    padding: 0 2px;
    font-weight: 400;
    text-align: left;
}
.property-box th:first-child {
    width: 41px;
    border-right: 1px solid #e5e5e5;
}
.bottom-tabs {
    display: flex;
    gap: 4px;
    height: 9px;
    padding-left: 2px;
}
.bottom-tabs button {
    position: relative;
    height: 7px;
    padding: 0 3px;
    line-height: 6px;
    border-bottom: 1px solid #555;
}
/* slanted sides */
.bottom-tabs button::before,
.bottom-tabs button::after {
    content: "";
    position: absolute;
    top: 0;
    bottom: 0;
    border-left: 1px solid #555;
}
.bottom-tabs button::before {
    left: -2px;
    transform: skewX(25deg);
}
.bottom-tabs button::after {
    right: -2px;
    transform: skewX(-25deg);
}

/* 3D view */
.document {
    display: flex;
    flex-direction: column;
    flex: 1;
    min-width: 0;
}
.viewport {
    position: relative;
    flex: 1;
    min-height: 0;
    background: linear-gradient(#333366, #9494a8);
}
.model {
    display: block;
    width: 100%;
    height: 100%;
}
.navcube {
    position: absolute;
    top: 0;
    right: 0;
    width: 70px;
    height: 65px;
}
.cube-label {
    font-size: 11px;
    font-weight: 700;
}
.cube-label .side {
    font-size: 6px;
}
.axis {
    position: absolute;
    right: 0;
    bottom: 12px;
    width: 24px;
    height: 24px;
}
.doc-tabs {
    display: flex;
    height: 11px;
    padding-left: 1px;
}
.doc-tab {
    display: flex;
    align-items: center;
    gap: 2px;
    padding: 0 5px 0 4px;
    border-right: 1px solid #ddd;
}
.doc-tab svg {
    width: 6px;
    height: 6px;
}
.doc-tab button {
    display: flex;
    border: 1px solid #999;
    color: #aaa;
}
.doc-tab button svg {
    width: 4px;
    height: 4px;
}
.doc-tab.active {
    background: #fff;
}
.doc-tab.active button {
    border-color: #d9492c;
    background: #e0573a;
    color: #fff;
}

/* status bar */
.statusbar {
    display: flex;
    align-items: center;
    height: 9px;
    padding: 0 3px 0 1px;
}
.message {
    flex: 1;
}
.navstyle {
    display: flex;
    align-items: center;
    gap: 1px;
    padding: 0 3px 0 6px;
    border-left: 1px solid #ddd;
    border-right: 1px solid #ddd;
}
.navstyle svg {
    width: 6px;
    height: 6px;
}
.navstyle i {
    border: 1px solid transparent;
    border-top: 2px solid #111;
    border-bottom: none;
}
.dimensions {
    padding-left: 2px;
}
```
